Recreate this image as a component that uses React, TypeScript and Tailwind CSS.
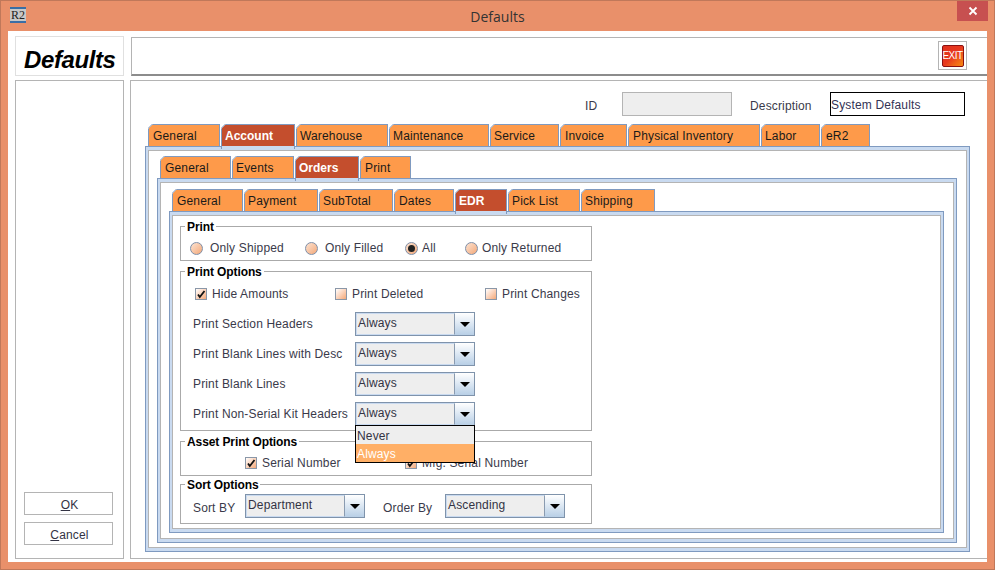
import type { ReactNode } from 'react'

const FONT = "font-['Liberation_Sans',Arial,sans-serif]"

type TabDef = [string, number, boolean?, boolean?]

function Tab({ label, width, active, tight }: { label: string; width: number; active?: boolean; tight?: boolean }) {
  return (
    <div
      style={{ width }}
      className={`relative shrink-0 border-t border-l border-r border-[#7f9ac0] text-[12px] leading-[22px] ${
        active
          ? 'h-[25px] -mb-[3px] border-b-0 bg-[#c44e2d] pl-[3px] font-bold tracking-normal text-white'
          : `h-[22px] bg-[#fe9a4a] text-[#1a1a1a] ${tight ? 'pl-[3px]' : 'pl-[4px]'}`
      }`}
    >
      {/* chamfered corner */}
      <svg className="absolute -left-px -top-px" width="5" height="5" viewBox="0 0 5 5">
        <path d="M0 0H5L0 5Z" fill="#fff" />
        <path d="M0 4.5L4.5 0" stroke="#7f9ac0" />
      </svg>
      {active && <div className="absolute left-0 right-0 top-[21px] h-[3px] bg-[#c9daf0]" />}
      <span className="relative">{label}</span>
    </div>
  )
}

function TabRow({ tabs }: { tabs: TabDef[] }) {
  return (
    <div className="relative z-10 flex h-[22px] gap-px pl-[3px]">
      {tabs.map(([label, width, active, tight]) => (
        <Tab key={label} label={label} width={width} active={active} tight={tight} />
      ))}
    </div>
  )
}

function TabPanel({ className, children }: { className?: string; children: ReactNode }) {
  return (
    <div className={`border border-[#7f9ac0] ${className ?? ''}`}>
      <div className="h-full border-[3px] border-[#c9daf0] border-l-2 border-r-2">
        <div className="h-full border border-[#b4b4b4] bg-white">{children}</div>
      </div>
    </div>
  )
}

function Group({ title, className, children }: { title: string; className: string; children: ReactNode }) {
  return (
    <fieldset className={`w-[412px] border border-[#aaaaaa] ${className}`}>
      <legend className="relative top-px ml-[4px] px-[2px] text-[12px] leading-[14px] font-bold tracking-[-0.1px] text-black">
        {title}
      </legend>
      {children}
    </fieldset>
  )
}

function Radio({ label, width, checked, near }: { label: string; width: number; checked?: boolean; near?: boolean }) {
  return (
    <div style={{ width }} className="flex shrink-0 items-center">
      <div className="flex h-[13px] w-[13px] items-center justify-center rounded-full border border-[#7f8fa8] bg-gradient-to-br from-[#fbe3d2] to-[#f3a878]">
        {checked && <div className="h-[7px] w-[7px] rounded-full bg-[#222222]" />}
      </div>
      <span className={`text-[12px] text-[#3a3a4a] ${near ? 'ml-[4px]' : 'ml-[7px]'}`}>{label}</span>
    </div>
  )
}

function Check({ label, width, checked }: { label: string; width: number; checked?: boolean }) {
  return (
    <div style={{ width }} className="flex shrink-0 items-center">
      <div className="h-[12px] w-[12px] border border-[#8a97a8] bg-gradient-to-br from-[#ffffff] to-[#f3a878]">
        {checked && (
          <svg width="10" height="10" viewBox="0 0 10 10">
            <path d="M2 5.5L3.8 8L8.5 2" fill="none" stroke="#111" strokeWidth="1.8" />
          </svg>
        )}
      </div>
      <span className="ml-[5px] text-[12px] text-[#3a3a4a]">{label}</span>
    </div>
  )
}

function Combo({ value }: { value: string }) {
  return (
    <div className="flex h-[24px] w-[120px] shrink-0 border border-[#7f93ab]">
      <div className="flex-1 border border-[#c9daf0] border-r-[#8a9bb0] bg-[#eeeeee] pl-[1px] text-[12px] leading-[18px] text-[#333344]">
        {value}
      </div>
      <div className="flex w-[19px] items-center justify-center bg-gradient-to-b from-[#ffffff] to-[#b8cfe6]">
        <div className="h-0 w-0 border-x-[5px] border-t-[5px] border-x-transparent border-t-black" />
      </div>
    </div>
  )
}

function ComboRow({ label, value }: { label: string; value: string }) {
  return (
    <div className="flex h-[24px] items-center pl-[12px]">
      <span className="w-[162px] shrink-0 text-[12px] text-[#3a3a4a]">{label}</span>
      <Combo value={value} />
    </div>
  )
}

function SideButton({ mnemonic, rest }: { mnemonic: string; rest: string }) {
  return (
    <button className="h-[23px] w-[89px] border border-[#b4b4b4] bg-white pl-[2px] pt-[2px] text-[12px] leading-[20px] text-[#333344]">
      <span className="underline">{mnemonic}</span>
      {rest}
    </button>
  )
}

export default function App() {
  return (
    <div className={`${FONT} flex h-[570px] w-[995px] flex-col overflow-hidden border border-[#c0785a] bg-[#e9906a] tracking-[0.15px]`}>
      {/* Title bar */}
      <div className="relative flex h-[30px] shrink-0 items-center justify-center">
        <div className="absolute left-[9px] top-[6px] flex h-[16px] w-[16px] flex-col justify-between bg-[#c8c8c8]">
          <div className="h-[2px] bg-[#3a6ea5]" />
          <span className="text-center font-['Liberation_Serif',serif] text-[12px] leading-[12px] tracking-normal text-[#222222]">R2</span>
          <div className="h-[2px] bg-[#3a6ea5]" />
        </div>
        <span className="font-['Open_Sans',sans-serif] text-[14px] tracking-normal text-[#333333]">Defaults</span>
        <div className="absolute right-[6px] top-0 flex h-[20px] w-[31px] items-center justify-center bg-[#c75050]">
          <svg width="10" height="10" viewBox="0 0 10 10">
            <path d="M1.5 1.5L8.5 8.5M8.5 1.5L1.5 8.5" stroke="#fff" strokeWidth="1.8" />
          </svg>
        </div>
      </div>

      {/* Client area */}
      <div className="mx-[7px] flex h-[531px] w-[979px] gap-[6px] bg-white pl-[7px] pt-[5px]">
        {/* Left column */}
        <div className="flex w-[109px] shrink-0 flex-col gap-[4px]">
          <div className="flex h-[40px] items-center border border-[#e0e0e0] pl-[8px] pt-[8px] text-[24px] font-bold italic tracking-[-0.4px] text-black">
            Defaults
          </div>
          <div className="flex h-[479px] flex-col items-start justify-end gap-[7px] border border-[#b4b4b4] pb-[13px] pl-[8px]">
            <SideButton mnemonic="O" rest="K" />
            <SideButton mnemonic="C" rest="ancel" />
          </div>
        </div>

        {/* Right column */}
        <div className="flex flex-1 flex-col gap-[4px]">
          <div className="ml-px mt-px flex h-[39px] items-start justify-end border-t border-l border-b-2 border-[#b4b4b4] border-b-[#8c8c8c] pr-[20px] pt-[3px]">
            <div className="flex h-[29px] w-[29px] items-center justify-center border border-[#b4b4b4]">
              <div className="flex h-[22px] w-[22px] items-center justify-center rounded-[2px] border border-[#8a1010] bg-gradient-to-br from-[#e0301e] via-[#e8381e] to-[#f78a10] text-[10px] tracking-[-0.5px] text-white">
                EXIT
              </div>
            </div>
          </div>

          <div className="flex h-[479px] flex-col border-t border-l border-b border-[#b4b4b4] pl-[14px] pr-[16px]">
            {/* ID and description */}
            <div className="flex h-[43px] items-end pb-[8px] text-[12px] text-[#3a3a4a]">
              <span className="ml-[440px] w-[37px] pb-[1px]">ID</span>
              <div className="h-[24px] w-[110px] border border-[#b4b4b4] bg-[#eeeeee]" />
              <span className="ml-[18px] w-[80px] pb-[1px]">Description</span>
              <div className="h-[24px] w-[135px] border border-black leading-[24px] text-[#333355]">System Defaults</div>
            </div>

            <TabRow
              tabs={[
                ['General', 72],
                ['Account', 74, true],
                ['Warehouse', 92, false, true],
                ['Maintenance', 100, false, true],
                ['Service', 69, false, true],
                ['Invoice', 67],
                ['Physical Inventory', 132],
                ['Labor', 59, false, true],
                ['eR2', 49],
              ]}
            />
            <TabPanel className="h-[406px] w-[825px]">
              <div className="px-[8px] pt-[5px]">
                <TabRow
                  tabs={[
                    ['General', 71],
                    ['Events', 62, false, true],
                    ['Orders', 64, true],
                    ['Print', 51],
                  ]}
                />
                <TabPanel className="h-[365px] w-[800px]">
                  <div className="px-[8px] pt-[6px]">
                    <TabRow
                      tabs={[
                        ['General', 71],
                        ['Payment', 74, false, true],
                        ['SubTotal', 74, false, true],
                        ['Dates', 60],
                        ['EDR', 52, true],
                        ['Pick List', 72, false, true],
                        ['Shipping', 74, false, true],
                      ]}
                    />
                    <TabPanel className="h-[322px] w-[775px]">
                      <div className="relative flex flex-col pl-[7px] pt-[3px]">
                        <Group title="Print" className="h-[42px]">
                          <div className="flex h-[27px] items-center pl-[9px] pt-[3px]">
                            <Radio label="Only Shipped" width={115} />
                            <Radio label="Only Filled" width={100} />
                            <Radio label="All" width={60} checked near />
                            <Radio label="Only Returned" width={120} near />
                          </div>
                        </Group>

                        <Group title="Print Options" className="mt-[3px] h-[167px]">
                          <div className="mt-px flex h-[30px] items-center pl-[14px]">
                            <Check label="Hide Amounts" width={140} checked />
                            <Check label="Print Deleted" width={150} />
                            <Check label="Print Changes" width={105} />
                          </div>
                          <div className="flex flex-col gap-[6px] pt-[3px]">
                            <ComboRow label="Print Section Headers" value="Always" />
                            <ComboRow label="Print Blank Lines with Desc" value="Always" />
                            <ComboRow label="Print Blank Lines" value="Always" />
                            <ComboRow label="Print Non-Serial Kit Headers" value="Always" />
                          </div>
                        </Group>

                        <Group title="Asset Print Options" className="mt-[3px] h-[42px]">
                          <div className="mt-px flex h-[26px] items-center pl-[64px] pt-[2px]">
                            <Check label="Serial Number" width={160} checked />
                            <Check label="Mfg. Serial Number" width={160} checked />
                          </div>
                        </Group>

                        <Group title="Sort Options" className="mt-[1px] h-[47px]">
                          <div className="mt-[3px] flex h-[24px] items-center pl-[12px]">
                            <span className="w-[52px] pt-[4px] text-[12px] text-[#3a3a4a]">Sort BY</span>
                            <Combo value="Department" />
                            <span className="ml-[18px] w-[62px] pt-[4px] text-[12px] text-[#3a3a4a]">Order By</span>
                            <Combo value="Ascending" />
                          </div>
                        </Group>

                        {/* Open combo popup */}
                        <div className="absolute left-[182px] top-[209px] z-20 w-[120px] border border-black bg-[#eeeeee] text-[12px] leading-[18px]">
                          <div className="h-[18px] pl-[1px] pt-px text-[#333344]">Never</div>
                          <div className="h-[18px] bg-[#ffaf66] pl-[1px] pt-px text-white">Always</div>
                        </div>
                      </div>
                    </TabPanel>
                  </div>
                </TabPanel>
              </div>
            </TabPanel>
          </div>
        </div>
      </div>
    </div>
  )
}
